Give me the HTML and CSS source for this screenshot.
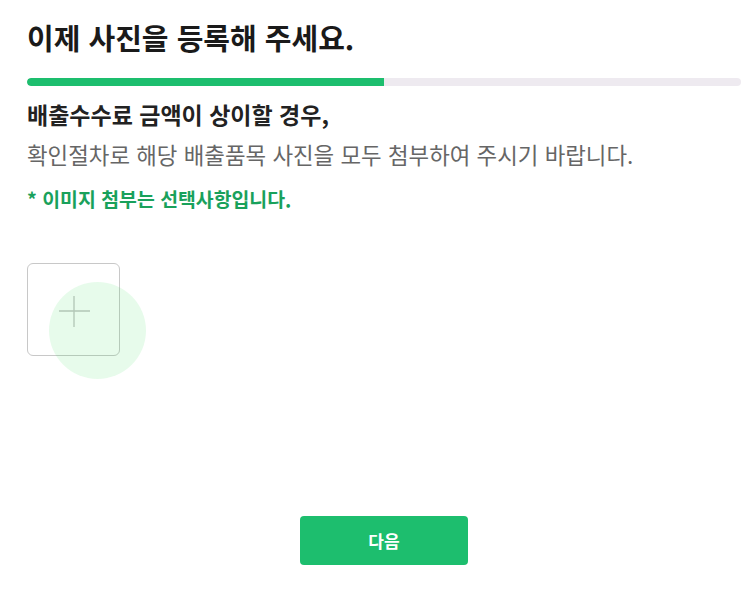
FILE: index.html
```html
<!DOCTYPE html>
<html lang="ko">
<head>
<meta charset="utf-8">
<link rel="stylesheet" href="styles.css">
</head>
<body>
<main class="page">
  <h1 class="title">이제 사진을 등록해 주세요.</h1>
  <div class="progress"><div class="progress-fill"></div></div>
  <p class="lead">배출수수료 금액이 상이할 경우,</p>
  <p class="desc">확인절차로 해당 배출품목 사진을 모두 첨부하여 주시기 바랍니다.</p>
  <p class="note">* 이미지 첨부는 선택사항입니다.</p>
  <div class="uploader">
    <button class="upload-box" type="button" aria-label="사진 추가">
      <svg class="plus" width="32" height="32" viewBox="0 0 32 32"><path d="M16 1V32M1 16H32" stroke="#c4c4c4" stroke-width="1.3" fill="none"/></svg>
    </button>
    <span class="ripple"></span>
  </div>
  <div class="actions">
    <button class="next" type="button">다음</button>
  </div>
</main>
</body>
</html>
```
FILE: styles.css
```css
* { box-sizing: border-box; }
html, body { margin: 0; padding: 0; background: #fff; }
body {
  font-family: "Noto Sans CJK KR", "Noto Sans", sans-serif;
  color: #222;
}
.page {
  width: 750px;
  height: 589px;
  padding: 18px 9px 0 27px;
  display: flex;
  flex-direction: column;
}
.title {
  margin: 0;
  font-size: 29px;
  line-height: 38px;
  font-weight: 700;
  color: #1a1a1a;
  letter-spacing: 0;
}
.progress {
  margin-top: 22px;
  height: 8px;
  border-radius: 4px;
  background: #eeeaf0;
  overflow: hidden;
}
.progress-fill {
  width: 50%;
  height: 100%;
  background: #1dbe6e;
  border-radius: 4px 0 0 4px;
}
.lead {
  margin: 13px 0 0;
  font-size: 23px;
  line-height: 30px;
  font-weight: 700;
  color: #222;
}
.desc {
  margin: 10px 0 0;
  font-size: 22.4px;
  line-height: 30px;
  font-weight: 400;
  color: #666;
}
.note {
  margin: 17px 0 0;
  font-size: 19.4px;
  line-height: 26px;
  font-weight: 700;
  color: #19a15b;
}
.uploader {
  position: relative;
  margin-top: 51px;
  width: 93px;
  height: 93px;
}
.upload-box {
  width: 93px;
  height: 93px;
  padding: 0;
  border: 1px solid #c8c8c8;
  border-radius: 6px;
  background: #fff;
  display: flex;
  align-items: center;
  justify-content: center;
}
.plus { display: block; margin: 2px 0 0 0; }
.ripple {
  position: absolute;
  left: 22px;
  top: 19px;
  width: 97px;
  height: 97px;
  border-radius: 50%;
  background: rgba(60, 220, 90, 0.12);
  pointer-events: none;
}
.actions {
  margin-top: 160px;
  display: flex;
  justify-content: center;
}
.next {
  width: 168px;
  height: 49px;
  border: 0;
  border-radius: 4px;
  background: #1dbe6e;
  color: #fff;
  font-family: "Noto Sans CJK KR", "Noto Sans", sans-serif;
  font-size: 17px;
  font-weight: 700;
}
```
